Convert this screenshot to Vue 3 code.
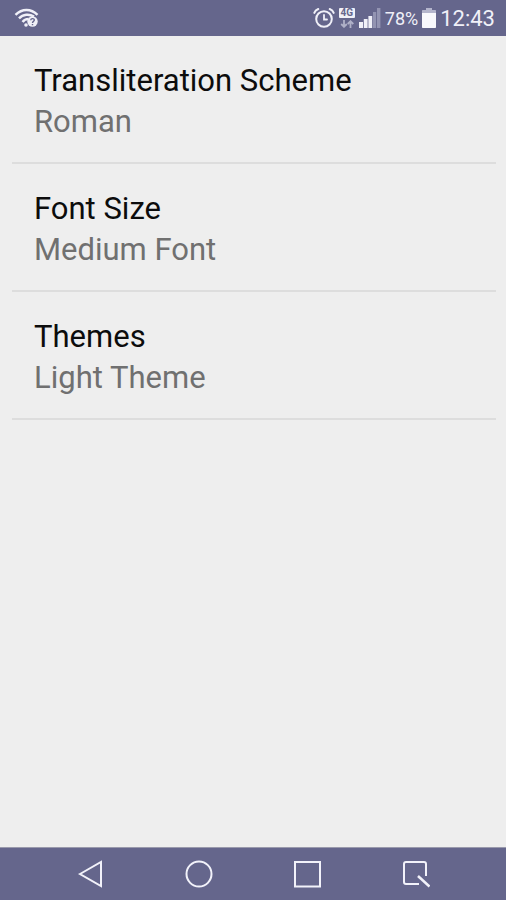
<script setup>
import { ref } from 'vue'

const settings = ref([
  { title: 'Transliteration Scheme', value: 'Roman' },
  { title: 'Font Size', value: 'Medium Font' },
  { title: 'Themes', value: 'Light Theme' },
])
</script>

<template>
  <div class="screen">
    <header class="status">
      <svg class="wifi" width="26" height="20" viewBox="0 0 26 20" fill="none" stroke="#f0f0f8" stroke-width="2.4" aria-hidden="true">
        <path d="M1.500 6.800C8 .3 17 .3 23.500 6.800" />
        <path d="M5 10.400C9 6 15.500 5.800 20 8.500" />
        <path d="M8.600 14C10 11.800 12 11 14.500 11" />
        <circle cx="12" cy="17" r="1.800" fill="#f0f0f8" stroke="none" />
        <circle cx="18.500" cy="13.500" r="5.200" fill="#f0f0f8" stroke="none" />
        <path d="M16.700 12.200C16.900 10 20.500 10.200 20.300 12.200C20.100 13.500 18.500 13.300 18.500 15M18.500 16V17.300" stroke="#65668c" stroke-width="1.400" />
      </svg>
      <div class="indicators">
        <svg width="22" height="22" viewBox="0 0 22 22" fill="none" stroke="#f0f0f8" stroke-width="2" stroke-linecap="round" aria-hidden="true">
          <circle cx="11" cy="12" r="7.800" />
          <path d="M11 8V12.500H14" stroke-width="1.800" />
          <path d="M1.300 5.900C2 4 3.500 2.700 5.300 2M16.700 2C18.500 2.700 20 4 20.700 5.900" />
        </svg>
        <span class="network">
          <span class="badge">4G</span>
          <svg width="14" height="8" viewBox="0 0 14 8" fill="none" stroke="#b0b1c8" stroke-width="1.800" aria-hidden="true">
            <path d="M4 0V6.500M1.200 4L4 6.800L6.800 4M10.500 8V1.500M7.700 4L10.500 1.200L13.300 4" />
          </svg>
        </span>
        <svg width="22" height="20" viewBox="0 0 22 20" fill="#f0f0f8" aria-hidden="true">
          <path d="M0 14H4V20H0ZM4.800 11H8.600V20H4.800ZM9.400 8H13.200V20H9.400Z" />
          <path d="M14 4H17.200V20H14ZM18 0H21.400V20H18Z" fill="#9394b2" />
        </svg>
        <span class="percent">78%</span>
        <svg width="14" height="20" viewBox="0 0 14 20" aria-hidden="true">
          <path d="M4 0H10V2H13C13.600 2 14 2.400 14 3V6H0V3C0 2.400.4 2 1 2H4Z" fill="#b4b5cc" />
          <path d="M0 5H14V19C14 19.600 13.600 20 13 20H1C.4 20 0 19.600 0 19Z" fill="#f8f8fc" />
        </svg>
        <time class="clock">12:43</time>
      </div>
    </header>

    <main class="settings">
      <button v-for="item in settings" :key="item.title" type="button" class="row">
        <span class="title">{{ item.title }}</span>
        <span class="value">{{ item.value }}</span>
      </button>
    </main>

    <nav class="navbar">
      <button type="button" aria-label="Back">
        <svg width="28" height="28" viewBox="0 0 28 28"><path d="M4 14L25 2V26Z" /></svg>
      </button>
      <button type="button" aria-label="Home">
        <svg width="28" height="28" viewBox="0 0 28 28"><circle cx="14" cy="14" r="12.500" /></svg>
      </button>
      <button type="button" aria-label="Recent apps">
        <svg width="28" height="28" viewBox="0 0 28 28"><rect x="2" y="2" width="25" height="24.500" /></svg>
      </button>
      <button type="button" aria-label="Capture">
        <svg width="28" height="28" viewBox="0 0 28 28">
          <path d="M17 24H4Q2 24 2 22V4Q2 2 4 2H22Q24 2 24 4V16" />
          <path d="M16 16L27.500 26.500" stroke-width="2.600" />
        </svg>
      </button>
    </nav>
  </div>
</template>

<style>
body {
  background: #eeeeee;
}
</style>

<style scoped>
.screen {
  display: flex;
  flex-direction: column;
  min-height: 100vh;
  background: #eeeeee;
  font-family: Roboto, "Liberation Sans", sans-serif;
}

button {
  margin: 0;
  padding: 0;
  border: 0;
  background: none;
  font: inherit;
  cursor: pointer;
}

svg {
  display: block;
  flex: none;
}

.status {
  display: flex;
  align-items: center;
  justify-content: space-between;
  height: 36px;
  padding: 0 11px 0 14px;
  background: #65668c;
  color: #f0f0f8;
}

.indicators {
  display: flex;
  align-items: center;
  gap: 4px;
}

.network {
  display: flex;
  flex-direction: column;
  align-items: center;
  gap: 2px;
}

.badge {
  width: 16px;
  border-radius: 1px;
  background: #f0f0f8;
  color: #65668c;
  font-size: 10px;
  font-weight: 700;
  line-height: 10px;
  text-align: center;
}

.percent {
  font-size: 18px;
}

.clock {
  font-size: 22px;
}

.settings {
  display: flex;
  flex: 1;
  flex-direction: column;
  padding: 0 10px 0 12px;
}

.row {
  display: flex;
  flex-direction: column;
  padding: 24px 22px 20px;
  border-bottom: 2px solid #dddddd;
  font-size: 31px;
  line-height: 41px;
  text-align: left;
}

.title {
  color: #0c0c0c;
}

.value {
  color: #707070;
}

.navbar {
  display: grid;
  grid-template-columns: repeat(4, 1fr);
  height: 53px;
  padding: 0 36px;
  border-top: 1px solid #9a9aac;
  box-sizing: border-box;
  background: #65668c;
}

.navbar button {
  display: flex;
  align-items: center;
  justify-content: center;
}

.navbar svg {
  fill: none;
  stroke: #f2f2fa;
  stroke-width: 2;
}
</style>
